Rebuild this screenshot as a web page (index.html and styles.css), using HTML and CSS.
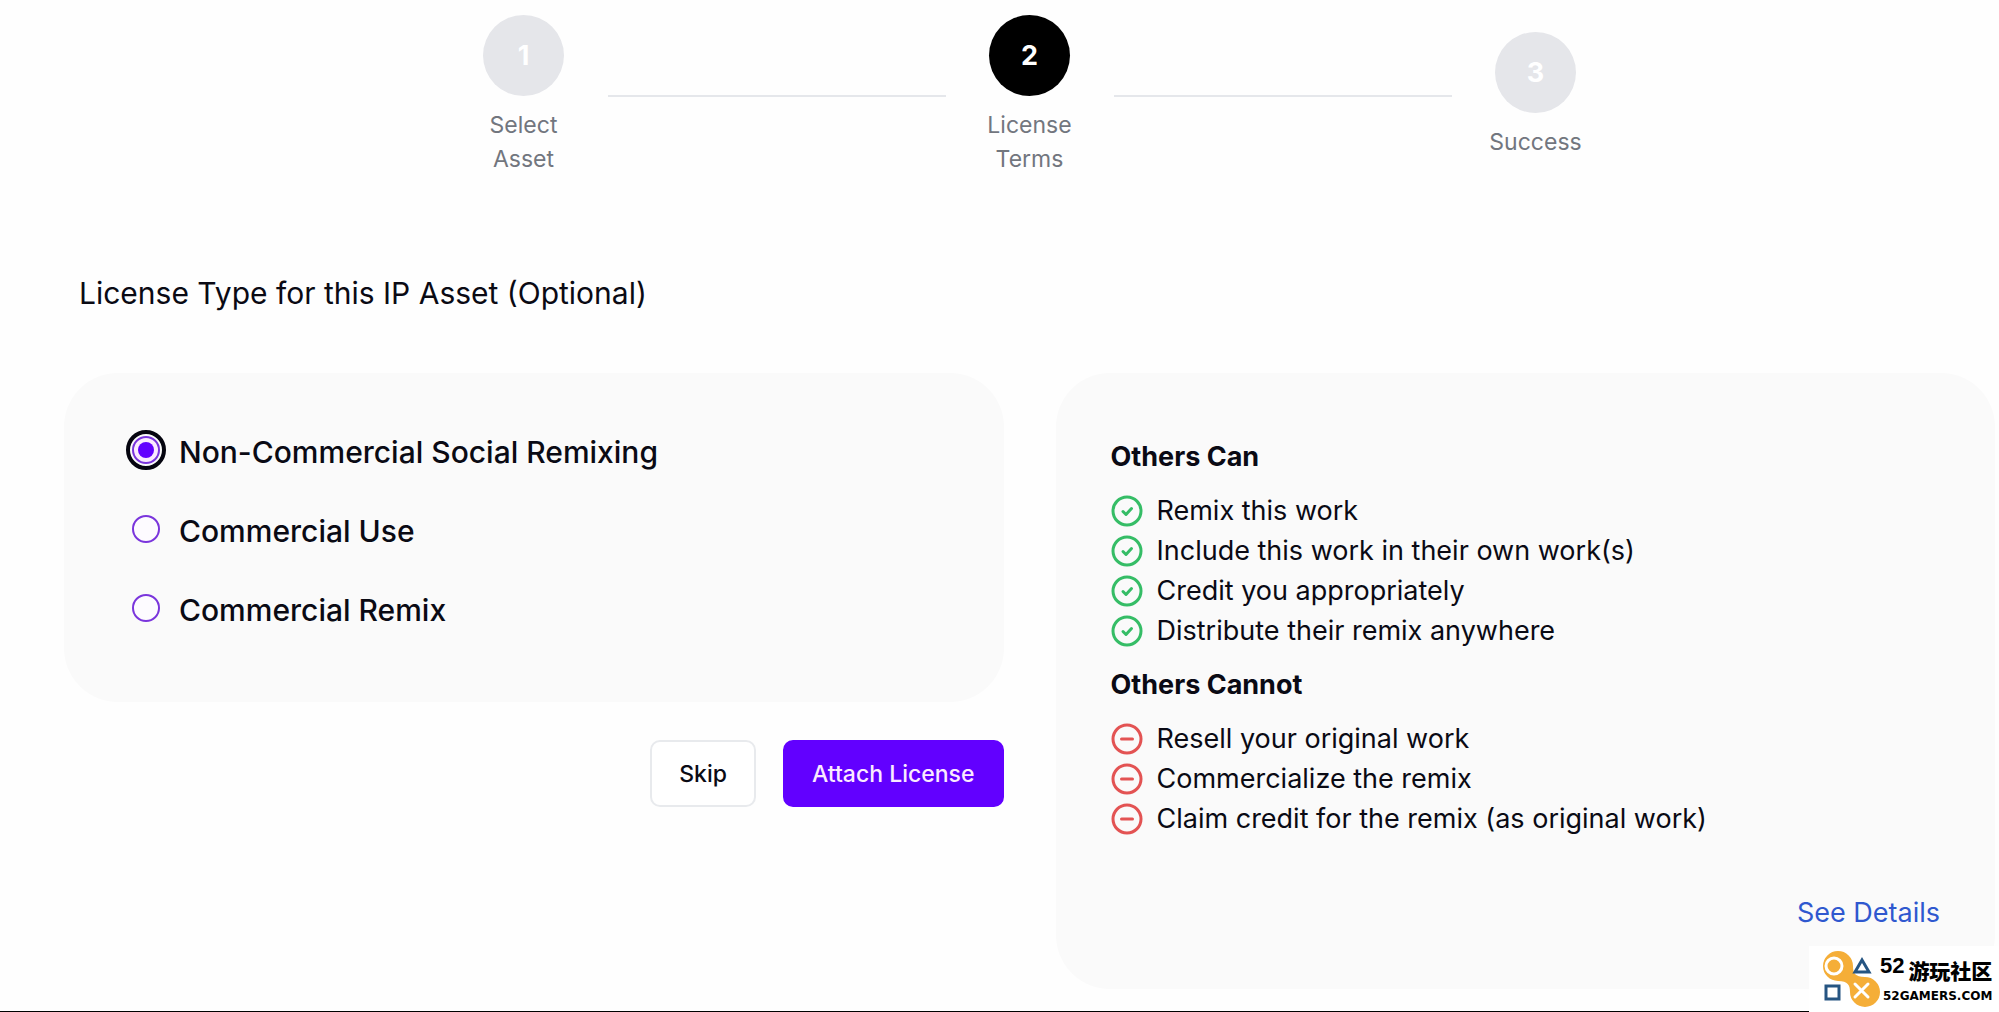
FILE: index.html
```html
<!DOCTYPE html>
<html lang="en">
<head>
<meta charset="utf-8">
<meta name="viewport" content="width=device-width, initial-scale=1">
<title>License Terms</title>
<link rel="stylesheet" href="styles.css">
</head>
<body>
<svg class="sprite" aria-hidden="true">
  <symbol id="check" viewBox="0 0 32 32"><circle cx="16" cy="16" r="14"/><path d="M12 16.500l3 3 5.500-6"/></symbol>
  <symbol id="minus" viewBox="0 0 32 32"><circle cx="16" cy="16" r="14"/><path d="M10.500 16h11"/></symbol>
</svg>
<main class="page">
  <ol class="stepper">
    <li class="step"><span class="step-number">1</span><span class="step-label">Select Asset</span></li>
    <li class="step-line" role="presentation"></li>
    <li class="step step-active" aria-current="step"><span class="step-number">2</span><span class="step-label">License Terms</span></li>
    <li class="step-line" role="presentation"></li>
    <li class="step"><span class="step-number">3</span><span class="step-label">Success</span></li>
  </ol>

  <h1 class="title" id="license-title">License Type for this IP Asset (Optional)</h1>

  <div class="columns">
    <form class="license-form">
      <div class="card options" role="radiogroup" aria-labelledby="license-title">
        <label class="option"><input class="radio" type="radio" name="license" checked>Non-Commercial Social Remixing</label>
        <label class="option"><input class="radio" type="radio" name="license">Commercial Use</label>
        <label class="option"><input class="radio" type="radio" name="license">Commercial Remix</label>
      </div>
      <div class="actions">
        <button class="button" type="button">Skip</button>
        <button class="button button-primary" type="button">Attach License</button>
      </div>
    </form>

    <section class="card terms">
      <h2 class="terms-heading">Others Can</h2>
      <ul class="terms-list can">
        <li><svg class="icon"><use href="#check"/></svg>Remix this work</li>
        <li><svg class="icon"><use href="#check"/></svg>Include this work in their own work(s)</li>
        <li><svg class="icon"><use href="#check"/></svg>Credit you appropriately</li>
        <li><svg class="icon"><use href="#check"/></svg>Distribute their remix anywhere</li>
      </ul>
      <h2 class="terms-heading">Others Cannot</h2>
      <ul class="terms-list cannot">
        <li><svg class="icon"><use href="#minus"/></svg>Resell your original work</li>
        <li><svg class="icon"><use href="#minus"/></svg>Commercialize the remix</li>
        <li><svg class="icon"><use href="#minus"/></svg>Claim credit for the remix (as original work)</li>
      </ul>
      <a class="details" href="#">See Details</a>
    </section>
  </div>
</main>

<aside class="badge">
  <svg class="badge-logo" viewBox="0 0 58 58" aria-hidden="true">
    <path class="badge-blob" d="M16 1a15 15 0 0 1 15 15c0 7 2 11 12 11a15 15 0 1 1-15 15c0-7-2-11-12-11a15 15 0 0 1 0-30z"/>
    <circle class="badge-light" cx="12" cy="16" r="8"/>
    <path class="badge-light" d="M33 34l13 13M46 34l-13 13"/>
    <path class="badge-blue" d="M40 10l7 12H33z"/>
    <path class="badge-blue" d="M4 36h13v13H4z"/>
  </svg>
  <div class="badge-text">
    <div class="badge-name"><span class="badge-number">52</span><span class="badge-title" lang="zh-CN">游玩社区</span></div>
    <div class="badge-domain">52GAMERS.COM</div>
  </div>
</aside>
</body>
</html>
```
FILE: styles.css
```css
* { box-sizing: border-box; }

body {
  margin: 0;
  min-height: 100vh;
  border-bottom: 1px solid #000;
  background: #fefefe;
  color: #0a0a14;
  font-family: Inter, "Noto Sans CJK SC", sans-serif;
}

.sprite { display: none; }

.page { padding: 15px 4px 20px 64px; }

.stepper {
  display: flex;
  align-items: center;
  max-width: 1180px;
  margin: 0 auto;
  padding: 0;
  list-style: none;
}

.step {
  display: flex;
  flex-direction: column;
  align-items: center;
  gap: 12px;
  width: 168px;
  padding: 0 40px;
  color: #72767e;
  font-size: 23px;
  line-height: 34px;
  text-align: center;
}

.step-number {
  display: grid;
  place-items: center;
  width: 81px;
  height: 81px;
  border-radius: 50%;
  background: #e5e6ea;
  color: #fff;
  font-size: 27px;
  font-weight: 700;
}

.step-active .step-number { background: #000; }

.step-line {
  flex: 1;
  height: 2px;
  background: #e5e7eb;
}

.title {
  margin: 97px 0 60px 15px;
  font-size: 30px;
  font-weight: 400;
  line-height: 40px;
}

.columns {
  display: grid;
  grid-template-columns: 1fr 1fr;
  gap: 52px;
  align-items: start;
}

.card {
  border-radius: 54px;
  background: #fafafa;
}

.options {
  display: flex;
  flex-direction: column;
  gap: 39px;
  padding: 59px 68px 72px;
}

.option {
  display: flex;
  align-items: center;
  gap: 19px;
  font-size: 30px;
  font-weight: 500;
  line-height: 40px;
}

.radio {
  appearance: none;
  display: grid;
  place-items: center;
  width: 28px;
  height: 28px;
  margin: 0 0 4px;
  border: 2px solid #7a35dc;
  border-radius: 50%;
  background: #fdfbff;
}

.radio:checked {
  outline: 4px solid #05050f;
  outline-offset: 2px;
  background: #fbeaff;
}

.radio:checked::before {
  content: "";
  width: 16px;
  height: 16px;
  border-radius: 50%;
  background: #6200ff;
}

.actions {
  display: flex;
  justify-content: flex-end;
  gap: 27px;
  margin-top: 38px;
}

.button {
  height: 67px;
  padding: 0 27px;
  border: 2px solid #e8eaed;
  border-radius: 10px;
  background: #fff;
  color: #0a0a14;
  font-family: inherit;
  font-size: 23px;
  font-weight: 500;
}

.button-primary {
  border-color: #6200ff;
  background: #6200ff;
  color: #fbeaff;
}

.terms {
  display: flex;
  flex-direction: column;
  padding: 64px 55px;
  font-size: 27px;
  line-height: 40px;
}

.terms-heading {
  margin: 0 0 14px;
  font-size: 27px;
  font-weight: 700;
}

.terms-list {
  margin: 0 0 14px;
  padding: 0;
  list-style: none;
}

.terms-list li {
  display: flex;
  align-items: center;
  gap: 14px;
}

.icon {
  flex: none;
  width: 32px;
  height: 32px;
  fill: none;
  stroke: currentColor;
  stroke-width: 3;
  stroke-linecap: round;
  stroke-linejoin: round;
}

.can .icon { color: #35bd66; }
.cannot .icon { color: #e35353; }

.details {
  align-self: flex-end;
  margin: 40px 0 -8px;
  color: #2f58cf;
  text-decoration: none;
}

.badge {
  position: fixed;
  right: 0;
  bottom: 0;
  display: flex;
  width: 190px;
  height: 66px;
  padding: 4px 0 0 13px;
  background: #fff;
  color: #000;
}

.badge-logo {
  flex: none;
  width: 58px;
  height: 58px;
}

.badge-blob { fill: #f5ae38; }
.badge-light { fill: none; stroke: #fff; stroke-width: 3; stroke-linecap: round; }
.badge-blue { fill: none; stroke: #265582; stroke-width: 3; }

.badge-name {
  display: flex;
  justify-content: space-between;
  height: 38px;
  white-space: nowrap;
}

.badge-number {
  font-family: "Liberation Sans", sans-serif;
  font-size: 22px;
  font-weight: 700;
  line-height: 32px;
}

.badge-title {
  font-family: "Noto Sans CJK SC", sans-serif;
  font-size: 21px;
  font-weight: 900;
  line-height: 40px;
}

.badge-domain {
  padding-left: 3px;
  font-family: "DejaVu Sans", sans-serif;
  font-size: 12px;
  font-weight: 700;
  line-height: 16px;
}
```
